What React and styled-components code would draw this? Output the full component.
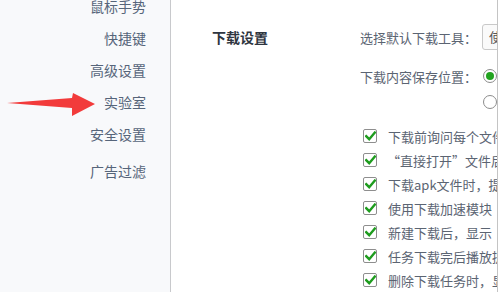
import React from "react";
import styled, { createGlobalStyle } from "styled-components";

const Global = createGlobalStyle`
  html, body { margin: 0; padding: 0; background: #fff; }
  body { font-family: "Noto Sans CJK SC", "Noto Sans", sans-serif; }
  * { box-sizing: border-box; }
`;

const Page = styled.div`
  position: relative;
  display: flex;
  width: 499px;
  height: 292px;
  overflow: hidden;
  background: #fff;
`;

const Sidebar = styled.nav`
  width: 171px;
  flex: none;
  background: #f8f9fb;
  border-right: 1px solid #c8c9cc;
  overflow: hidden;
`;

const NavList = styled.ul`
  list-style: none;
  margin: -10px 0 0 0;
  padding: 0 24px 0 0;
  display: flex;
  flex-direction: column;
  align-items: flex-end;
`;

const NavItem = styled.li`
  height: 32px;
  line-height: 32px;
  font-size: 14px;
  color: #56657a;
  margin-top: ${(p) => (p.$gap ? "5px" : "0")};
`;

const Main = styled.main`
  flex: none;
  width: 327px;
  height: 100%;
  border-right: 1px solid #c4c4c4;
  display: grid;
  grid-template-columns: 148px 1fr;
  padding: 24px 0 0 41px;
  overflow: hidden;
`;

const SectionTitle = styled.h3`
  margin: 0;
  height: 26px;
  line-height: 26px;
  font-size: 14px;
  font-weight: 700;
  color: #2e3540;
`;

const Settings = styled.div`
  display: flex;
  flex-direction: column;
  min-width: 0;
  overflow: hidden;
`;

const FieldRow = styled.div`
  display: flex;
  align-items: center;
  height: 26px;
  margin-top: ${(p) => p.$mt || 0}px;
  white-space: nowrap;
`;

const Label = styled.span`
  width: 122px;
  flex: none;
  font-size: 13px;
  color: #5b6472;
`;

const SelectBox = styled.div`
  flex: none;
  width: 120px;
  height: 26px;
  border: 1px solid #c9c9c9;
  border-radius: 3px;
  background: #fafafa;
  font-size: 13px;
  line-height: 24px;
  padding-left: 6px;
  color: #555;
`;

const Radio = styled.span`
  flex: none;
  width: 14px;
  height: 14px;
  margin-left: 1px;
  border-radius: 50%;
  border: 1px solid #8c8c8c;
  background: #fff;
  display: flex;
  align-items: center;
  justify-content: center;
  &::after {
    content: "";
    width: 8px;
    height: 8px;
    border-radius: 50%;
    background: ${(p) => (p.$on ? "#22a31f" : "transparent")};
  }
`;

const CheckList = styled.div`
  display: flex;
  flex-direction: column;
  margin-top: 9px;
`;

const CheckRow = styled.div`
  display: flex;
  align-items: center;
  height: 24px;
  padding-left: 3px;
  white-space: nowrap;
`;

const Box = styled.span`
  flex: none;
  width: 14px;
  height: 14px;
  border: 1px solid #8e8e8e;
  border-radius: 2px;
  background: #fff;
  display: flex;
  align-items: center;
  justify-content: center;
  margin-right: 11px;
`;

const CheckText = styled.span`
  font-size: 13px;
  color: #5b6472;
  margin-left: ${(p) => (p.$quote ? "-1px" : "0")};
`;

const Arrow = styled.svg`
  position: absolute;
  left: 6px;
  top: 92px;
`;

const Check = () => (
  <svg width="11" height="10" viewBox="0 0 11 10">
    <path d="M1.2 5.2 L4.2 8.2 L9.8 1.6" fill="none" stroke="#1e9c1e" strokeWidth="2.4" strokeLinecap="square" />
  </svg>
);

const navItems = ["鼠标手势", "快捷键", "高级设置", "实验室", "安全设置"];

const checks = [
  "下载前询问每个文件保存位置",
  "“直接打开”文件后，删除文件",
  "下载apk文件时，提示风险",
  "使用下载加速模块",
  "新建下载后，显示",
  "任务下载完后播放提示音",
  "删除下载任务时，显示确认框",
];

export default function App() {
  return (
    <>
      <Global />
      <Page>
        <Sidebar>
          <NavList>
            {navItems.map((t) => (
              <NavItem key={t}>{t}</NavItem>
            ))}
            <NavItem $gap>广告过滤</NavItem>
          </NavList>
        </Sidebar>
        <Main>
          <SectionTitle>下载设置</SectionTitle>
          <Settings>
            <FieldRow>
              <Label>选择默认下载工具：</Label>
              <SelectBox>使用浏览器下载</SelectBox>
            </FieldRow>
            <FieldRow $mt={13}>
              <Label>下载内容保存位置：</Label>
              <Radio $on />
            </FieldRow>
            <FieldRow>
              <Label />
              <Radio />
            </FieldRow>
            <CheckList>
              {checks.map((t, i) => (
                <CheckRow key={t}>
                  <Box>
                    <Check />
                  </Box>
                  <CheckText $quote={i === 1}>{t}</CheckText>
                </CheckRow>
              ))}
            </CheckList>
          </Settings>
        </Main>
        <Arrow width="92" height="26" viewBox="0 0 92 26">
          <path d="M1 11 L66 6 L67 1 L89 12 L66 24 L66 16 Z" fill="#f23b3b" />
        </Arrow>
      </Page>
    </>
  );
}
